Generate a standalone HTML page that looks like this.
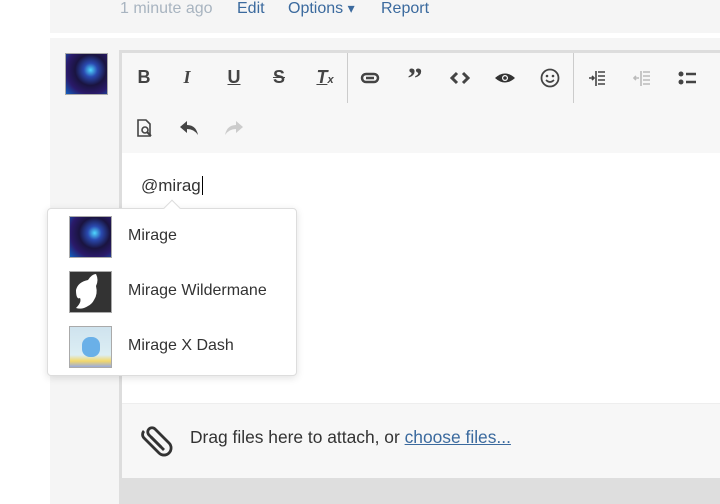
<!DOCTYPE html>
<html><head><meta charset="utf-8"><style>
*{margin:0;padding:0;box-sizing:border-box}
body{width:720px;height:504px;overflow:hidden;background:#fff;font-family:"Liberation Sans",Arial,sans-serif;position:relative}
.abs{position:absolute}
.ico{position:absolute;color:#444;font-weight:bold;font-size:18px;text-align:center;width:30px;transform:translateX(-15px)}
.av{position:absolute;border:1px solid #aaa}
.luna{background:radial-gradient(circle at 60% 40%,#4fd8ff 0,#2a4ab0 20%,#1a1440 45%,#2a1a6a 70%,#1060c0 100%)}
.it{position:absolute;left:80px;font-size:16px;color:#333}
</style></head><body>
<div class="abs" style="left:50px;top:0;width:670px;height:33px;background:#f5f5f5"></div>
<div class="abs" style="left:120px;top:0;font-size:16px;color:#a8b4c0">1 minute ago</div>
<div class="abs" style="left:237px;top:0;font-size:16px;color:#3b6a9e">Edit</div>
<div class="abs" style="left:288px;top:0;font-size:16px;color:#3b6a9e">Options <span style="font-size:14px">▾</span></div>
<div class="abs" style="left:381px;top:0;font-size:16px;color:#3b6a9e">Report</div>
<div class="abs" style="left:50px;top:38px;width:670px;height:466px;background:#f5f5f5"></div>
<div class="av luna" style="left:65px;top:53px;width:43px;height:42px"></div>
<div class="abs" style="left:119px;top:50px;width:601px;height:428px;border-left:3px solid #ddd;border-top:3px solid #ddd;background:#f7f7f7"></div>
<div class="abs" style="left:122px;top:153px;width:598px;height:250px;background:#fff"></div>
<div class="abs" style="left:122px;top:403px;width:598px;height:1px;background:#eee"></div>
<div class="abs" style="left:119px;top:478px;width:601px;height:26px;background:#dedede"></div>
<div class="abs" style="left:347px;top:53px;width:1px;height:50px;background:#ccc"></div>
<div class="abs" style="left:573px;top:53px;width:1px;height:50px;background:#ccc"></div>
<div class="ico" style="left:144px;top:67px">B</div>
<div class="ico" style="left:187px;top:67px;font-style:italic;font-family:'Liberation Serif',serif">I</div>
<div class="ico" style="left:234px;top:67px;text-decoration:underline">U</div>
<div class="ico" style="left:279px;top:67px;text-decoration:line-through">S</div>
<div class="ico" style="left:325px;top:67px;font-style:italic"><u>T</u><span style="font-size:11px">x</span></div>
<svg class="abs" style="left:360px;top:70px" width="20" height="16"><rect x="2" y="4" width="16" height="8" rx="4" fill="none" stroke="#444" stroke-width="2.5"/><line x1="6" y1="8" x2="14" y2="8" stroke="#444" stroke-width="2.5"/></svg>
<div class="ico" style="left:415px;top:62px;font-size:30px;font-family:'Liberation Serif',serif">”</div>
<svg class="abs" style="left:450px;top:70px" width="20" height="16"><path d="M7 3L2 8l5 5M13 3l5 5-5 5" fill="none" stroke="#444" stroke-width="3"/></svg>
<svg class="abs" style="left:494px;top:70px" width="22" height="16"><path d="M1 8Q11 -1 21 8Q11 17 1 8Z" fill="#333"/><circle cx="11" cy="8" r="3" fill="#fff"/><circle cx="11" cy="8" r="1.8" fill="#333"/></svg>
<svg class="abs" style="left:540px;top:68px" width="20" height="20"><circle cx="10" cy="10" r="8.5" fill="none" stroke="#444" stroke-width="1.8"/><circle cx="7" cy="8" r="1.3" fill="#444"/><circle cx="13" cy="8" r="1.3" fill="#444"/><path d="M6 12q4 4 8 0" fill="none" stroke="#444" stroke-width="1.6"/></svg>
<svg class="abs" style="left:588px;top:70px" width="20" height="16"><path d="M1 8h5M4 6l2 2-2 2M8 1v15M10 2h7M10 6h7M10 10h7M10 14h7" stroke="#444" stroke-width="1.6" fill="none"/></svg>
<svg class="abs" style="left:633px;top:70px" width="20" height="16"><path d="M1 8h5M3 6l-2 2 2 2M8 1v15M10 2h7M10 6h7M10 10h7M10 14h7" stroke="#bbb" stroke-width="1.6" fill="none"/></svg>
<svg class="abs" style="left:678px;top:70px" width="20" height="16"><circle cx="3" cy="4" r="2.5" fill="#444"/><circle cx="3" cy="12" r="2.5" fill="#444"/><path d="M8 4h10M8 12h10" stroke="#444" stroke-width="2.5"/></svg>
<svg class="abs" style="left:136px;top:119px" width="18" height="18"><path d="M2 1h8l4 4v12H2Z" fill="none" stroke="#444" stroke-width="1.6"/><circle cx="9" cy="11" r="3" fill="none" stroke="#444" stroke-width="1.6"/><path d="M11 13l4 4" stroke="#444" stroke-width="2"/></svg>
<svg class="abs" style="left:179px;top:120px" width="20" height="16"><path d="M8 1L1 7l7 6V9q7 0 11 6q-2-10-11-10Z" fill="#444"/></svg>
<svg class="abs" style="left:224px;top:120px" width="20" height="16"><path d="M12 1l7 6-7 6V9q-7 0-11 6q2-10 11-10Z" fill="#ccc"/></svg>
<div class="abs" style="left:141px;top:176px;font-size:17px;color:#333">@mirag<span style="border-left:1px solid #000;margin-left:1px"></span></div>
<div class="abs" style="left:47px;top:208px;width:250px;height:168px;background:#fff;border:1px solid #ddd;border-radius:4px;box-shadow:0 2px 8px rgba(0,0,0,.12)">
<div class="abs" style="left:118px;top:-7px;width:12px;height:12px;background:#fff;border-left:1px solid #ddd;border-top:1px solid #ddd;transform:rotate(45deg)"></div>
<div class="av luna" style="left:21px;top:7px;width:43px;height:42px"></div>
<div class="it" style="top:18px">Mirage</div>
<div class="av" style="left:21px;top:62px;width:43px;height:42px;background:#333"><svg width="41" height="40"><path d="M6 18q2-8 12-10q4-6 8-6q3 6 0 12q2 8-2 14q-2 4-6 6q-6 4-12 2q6-6 4-10q-4 2-4-8Z" fill="#fff"/></svg></div>
<div class="it" style="top:73px">Mirage Wildermane</div>
<div class="av" style="left:21px;top:117px;width:43px;height:42px;background:linear-gradient(180deg,#cfe3ee,#dceef4 70%,#f3d86a 85%,#9ad 100%)"><div style="position:absolute;left:12px;top:10px;width:18px;height:20px;background:#6ab0e8;border-radius:8px"></div></div>
<div class="it" style="top:128px">Mirage X Dash</div>
</div>
<svg class="abs" style="left:139px;top:423px" width="36" height="36"><path d="M25 27L10 12a4 4 0 0 1 6-6l14 14a7 7 0 0 1-10 10L5 15a5 5 0 0 1 0-7" fill="none" stroke="#333" stroke-width="2.8"/><path d="M22 24L12 14" stroke="#333" stroke-width="2.8"/></svg>
<div class="abs" style="left:190px;top:427px;font-size:17.4px;color:#333">Drag files here to attach, or <span style="color:#3b6a9e;text-decoration:underline">choose files...</span></div>
</body></html>
